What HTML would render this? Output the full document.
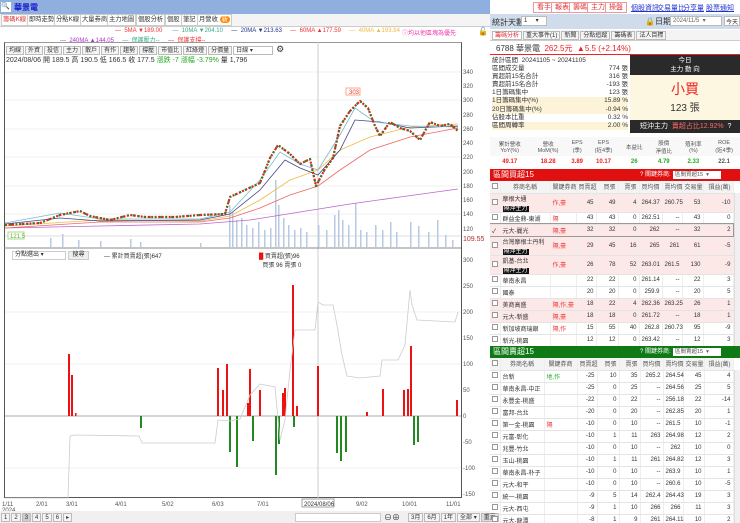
<!DOCTYPE html>
<html><head><meta charset="utf-8">
<style>
*{margin:0;padding:0;box-sizing:border-box}
body{width:740px;height:523px;overflow:hidden;background:#fff;font-family:"Liberation Sans","Noto Sans CJK TC",sans-serif;font-size:7px;color:#333;position:relative}
.a{position:absolute;white-space:nowrap}
.tab{position:absolute;top:14px;height:12px;border:1px solid #ccc;background:#fff;font-size:6.3px;line-height:10px;padding:0 1px}
.tb{display:inline-block;border:1px solid #bbb;background:#f4f4f4;padding:0 2px;margin-right:1px;height:9px;line-height:8px;font-size:6px}
.rbtn{position:absolute;top:2px;height:11px;border:1px solid #e99;background:#fff;color:#d33;font-size:7px;line-height:9px;padding:0 3px}
.lk{position:absolute;top:3px;color:#23c;text-decoration:underline;font-size:7px}
table{border-collapse:collapse;font-size:6px}
.bt td{border-bottom:1px solid #e4e4e4;border-right:1px solid #eee;text-align:right;padding:0 2px;height:12px}
.bt td:nth-child(2),.bt td:nth-child(1){text-align:left}
.bt td:nth-child(3){text-align:left;color:#e33}
.pk{background:#fde8e8}
.dk{background:#111;color:#fff;padding:0 1px}
.cb{display:inline-block;width:6px;height:6px;border:1px solid #999;background:#fff}
</style></head><body>
<div class="a" style="left:0;top:0;width:490px;height:14px;background:#8fb0de"></div>
<div class="a" style="left:490px;top:0;width:250px;height:14px;background:#fff"></div>
<div class="a" style="left:1px;top:2px;width:10px;height:10px;background:#fff;font-size:7px;line-height:10px">🔍</div>
<div class="a" style="left:14px;top:2px;color:#11c;font-weight:bold;font-size:8px">華景電</div>
<div class="rbtn" style="left:533px">看手</div><div class="rbtn" style="left:551px">報表</div><div class="rbtn" style="left:569px">籌碼</div><div class="rbtn" style="left:587px">主力</div><div class="rbtn" style="left:605px">操盤</div>
<div class="lk" style="left:631px">個股資訊</div><div class="lk" style="left:657px">交易量比</div><div class="lk" style="left:683px">分享量</div><div class="lk" style="left:706px">股票通知</div>
<div class="a" style="left:0;top:14px;width:490px;height:13px;background:#f4f4f4;border-bottom:1px solid #ccc"></div>
<div class="tab" style="left:1px;color:#d33">籌碼K線</div><div class="tab" style="left:27px">即時走勢</div><div class="tab" style="left:54px">分點K線</div><div class="tab" style="left:80px">大量券商</div><div class="tab" style="left:107px">主力地圖</div><div class="tab" style="left:136px">個股分析</div><div class="tab" style="left:165px">個股</div><div class="tab" style="left:181px">筆記</div><div class="tab" style="left:197px">月營收 <span style="background:#f80;color:#fff;border-radius:4px;padding:0 2px">新</span></div>
<div class="a" style="left:115px;top:28px;font-size:6px"><span style="color:#e33">— &nbsp;5MA ▼189.00</span>&nbsp;&nbsp;&nbsp;&nbsp;&nbsp;&nbsp;<span style="color:#3a8">— &nbsp;10MA ▼204.10</span>&nbsp;&nbsp;&nbsp;&nbsp;&nbsp;<span style="color:#238">— &nbsp;20MA ▼213.63</span>&nbsp;&nbsp;&nbsp;&nbsp;&nbsp;<span style="color:#e33">— &nbsp;60MA ▲177.59</span>&nbsp;&nbsp;&nbsp;&nbsp;&nbsp;<span style="color:#eb4">— &nbsp;40MA ▲193.84</span></div>
<div class="a" style="left:60px;top:35px;font-size:6px"><span style="color:#a3c">— &nbsp;240MA ▲144.05</span>&nbsp;&nbsp;&nbsp;&nbsp;&nbsp;<span style="color:#3a8">— &nbsp;保護壓力--</span>&nbsp;&nbsp;&nbsp;&nbsp;&nbsp;<span style="color:#e33">— &nbsp;保護支撐--</span></div>
<div class="a" style="left:402px;top:28px;font-size:6px;color:#e3a">ⓘ均以他區塊為優先</div>
<div class="a" style="left:478px;top:27px;font-size:8px">🔓</div>
<div class="a" style="left:4px;top:42px;width:458px;height:456px;border:1px solid #555;border-top:1px solid #999"></div>
<div class="a" style="left:6px;top:44px"><span class="tb">均線</span><span class="tb">外資</span><span class="tb">投信</span><span class="tb">主力</span><span class="tb">散戶</span><span class="tb">有作</span><span class="tb">趨勢</span><span class="tb">撐壓</span><span class="tb">市值比</span><span class="tb">紅綠燈</span><span class="tb">分價量</span><span class="tb" style="width:40px;background:#fff">日線 ▾</span> <span style="font-size:9px">⚙</span></div>
<div class="a" style="left:6px;top:55px;font-size:7px">2024/08/06 開 189.5 高 190.5 低 166.5 收 177.5 <span style="color:#2a2">漲跌 -7</span> <span style="color:#2a2">漲幅 -3.79%</span> 量 1,796</div>
<svg class="a" style="left:0;top:0" width="490" height="523">
<g stroke="#f0f0f0" stroke-width="1">
<line x1="5" x2="461" y1="72" y2="72"/><line x1="5" x2="461" y1="100" y2="100"/><line x1="5" x2="461" y1="129" y2="129"/><line x1="5" x2="461" y1="157" y2="157"/><line x1="5" x2="461" y1="186" y2="186"/><line x1="5" x2="461" y1="214" y2="214"/>
<line x1="5" x2="461" y1="312" y2="312"/><line x1="5" x2="461" y1="364" y2="364"/><line x1="5" x2="461" y1="468" y2="468"/>
</g>
<line x1="318" x2="318" y1="42" y2="498" stroke="#ccc"/>
<line x1="4" x2="461" y1="248" y2="248" stroke="#888"/>
<line x1="5" x2="461" y1="236" y2="236" stroke="#ddd"/>
<g fill="#b7c9e3">
<rect x="50" y="238" width="1.5" height="9"/><rect x="62" y="234" width="1.5" height="13"/><rect x="78" y="240" width="1.5" height="7"/><rect x="100" y="241" width="1.5" height="6"/><rect x="130" y="239" width="1.5" height="8"/><rect x="140" y="242" width="1.5" height="5"/><rect x="200" y="243" width="1.5" height="4"/>
<rect x="229" y="205" width="1.5" height="42"/><rect x="232" y="212" width="1.5" height="35"/><rect x="236" y="220" width="1.5" height="27"/><rect x="241" y="218" width="1.5" height="29"/><rect x="246" y="225" width="1.5" height="22"/><rect x="252" y="228" width="1.5" height="19"/><rect x="258" y="222" width="1.5" height="25"/><rect x="264" y="230" width="1.5" height="17"/><rect x="270" y="228" width="1.5" height="19"/><rect x="275" y="180" width="1.5" height="67"/><rect x="278" y="205" width="1.5" height="42"/><rect x="283" y="218" width="1.5" height="29"/><rect x="288" y="225" width="1.5" height="22"/><rect x="294" y="230" width="1.5" height="17"/><rect x="300" y="228" width="1.5" height="19"/><rect x="306" y="232" width="1.5" height="15"/><rect x="318" y="225" width="1.5" height="22"/><rect x="326" y="230" width="1.5" height="17"/><rect x="334" y="215" width="1.5" height="32"/><rect x="338" y="210" width="1.5" height="37"/><rect x="342" y="220" width="1.5" height="27"/><rect x="348" y="225" width="1.5" height="22"/><rect x="355" y="203" width="1.5" height="44"/><rect x="360" y="230" width="1.5" height="17"/><rect x="366" y="232" width="1.5" height="15"/><rect x="375" y="225" width="1.5" height="22"/><rect x="382" y="230" width="1.5" height="17"/><rect x="390" y="222" width="1.5" height="25"/><rect x="396" y="232" width="1.5" height="15"/><rect x="410" y="222" width="1.5" height="25"/><rect x="418" y="226" width="1.5" height="21"/><rect x="428" y="232" width="1.5" height="15"/><rect x="437" y="220" width="1.5" height="27"/><rect x="445" y="235" width="1.5" height="12"/><rect x="452" y="240" width="1.5" height="7"/>
</g>
<polyline fill="none" stroke="#b6c" stroke-width="0.8" points="5,228 100,226 200,224 250,220 300,212 350,204 400,197 458,189"/>
<polyline fill="none" stroke="#e66" stroke-width="0.8" points="5,228 100,222 200,222 230,218 260,208 290,195 318,186 340,170 370,150 410,137 458,128"/>
<polyline fill="none" stroke="#eb4" stroke-width="0.8" points="5,226 100,220 200,221 230,216 260,200 290,180 318,170 340,150 370,137 410,127 458,124"/>
<polyline fill="none" stroke="#448" stroke-width="0.8" points="5,224 60,218 100,221 200,220 230,214 260,190 285,160 300,168 318,175 340,150 355,120 380,122 410,128 458,126"/>
<polyline fill="none" stroke="#7bc" stroke-width="0.8" points="5,223 60,213 100,219 200,219 230,212 260,180 280,152 300,164 318,170 340,135 355,108 375,122 410,126 458,127"/>
<g fill="none" stroke-width="2.2" stroke-linejoin="round">
<polyline stroke="#d22" stroke-dasharray="2,1.5" points="5,225 40,223 60,215 80,211 90,216 110,220 130,215 145,217 175,217 200,215 225,214 230,197 245,190 260,183 270,158 278,145 290,154 300,164 310,159 316,186 325,169 333,158 340,126 350,111 360,101 368,108 375,126 380,136 390,122 400,128 410,131 420,140 430,122 440,126 450,124 458,131"/>
<polyline stroke="#282" stroke-dasharray="1.5,4" points="5,225 40,223 60,215 80,211 90,216 110,220 130,215 145,217 175,217 200,215 225,214 230,197 245,190 260,183 270,158 278,145 290,154 300,164 310,159 316,186 325,169 333,158 340,126 350,111 360,101 368,108 375,126 380,136 390,122 400,128 410,131 420,140 430,122 440,126 450,124 458,131"/>
</g>
<rect x="346" y="88" width="14" height="7" fill="#fff" stroke="#fa8"/><text x="349" y="94" font-size="6" fill="#e33">303</text>
<rect x="8" y="232" width="16" height="7" fill="#fff" stroke="#ad8"/><text x="10" y="238" font-size="6" fill="#6a3">121.5</text>
<line x1="5" x2="461" y1="416" y2="416" stroke="#aaa"/>
<g fill="#e11">
<rect x="68" y="354" width="2" height="62"/><rect x="71" y="375" width="2" height="41"/><rect x="75" y="413" width="1.5" height="3"/><rect x="217" y="368" width="2" height="48"/><rect x="222" y="390" width="2" height="26"/><rect x="226" y="364" width="2" height="52"/><rect x="247" y="403" width="2" height="13"/><rect x="249" y="369" width="2" height="47"/><rect x="259" y="390" width="2" height="26"/><rect x="282" y="393" width="2" height="23"/><rect x="284" y="388" width="2" height="28"/><rect x="292" y="285" width="2" height="131"/><rect x="296" y="406" width="2" height="10"/><rect x="317" y="366" width="2" height="50"/><rect x="366" y="412" width="2" height="4"/><rect x="382" y="389" width="2" height="27"/><rect x="403" y="390" width="2" height="26"/><rect x="407" y="389" width="2" height="27"/><rect x="410" y="346" width="2" height="70"/><rect x="456" y="400" width="2" height="16"/>
</g>
<g fill="#282">
<rect x="140" y="416" width="2" height="12"/><rect x="229" y="416" width="2" height="36"/><rect x="236" y="416" width="2" height="51"/><rect x="252" y="416" width="2" height="25"/><rect x="275" y="416" width="2" height="59"/><rect x="278" y="416" width="2" height="28"/><rect x="293" y="416" width="2" height="11"/><rect x="336" y="416" width="2" height="37"/><rect x="340" y="416" width="2" height="45"/><rect x="345" y="416" width="2" height="36"/><rect x="413" y="416" width="2" height="29"/><rect x="417" y="416" width="2" height="26"/>
</g>
<polyline fill="none" stroke="#ccc" stroke-width="0.8" points="5,498 68,498 70,436 75,435 139,436 142,443 215,443 218,420 230,421 240,419 250,395 260,384 275,387 280,440 285,420 290,370 295,330 315,330 318,302 323,305 333,305 337,325 342,355 347,376 360,378 380,376 382,360 398,360 405,345 410,290 412,305 417,320 455,322 458,312"/>
<g font-size="6" fill="#555">
<text x="463" y="74">340</text><text x="463" y="88">320</text><text x="463" y="102">300</text><text x="463" y="117">280</text><text x="463" y="131">260</text><text x="463" y="145">240</text><text x="463" y="159">220</text><text x="463" y="174">200</text><text x="463" y="188">180</text><text x="463" y="202">160</text><text x="463" y="216">140</text><text x="463" y="231">120</text>
<text x="463" y="262">300</text><text x="463" y="288">250</text><text x="463" y="314">200</text><text x="463" y="340">150</text><text x="463" y="366">100</text><text x="463" y="392">50</text><text x="463" y="418">0</text><text x="463" y="444">-50</text><text x="463" y="470">-100</text><text x="463" y="496">-150</text>
<text x="2" y="506">1/11</text><text x="2" y="512">2024</text><text x="36" y="506">2/01</text><text x="66" y="506">3/01</text><text x="115" y="506">4/01</text><text x="162" y="506">5/02</text><text x="212" y="506">6/03</text><text x="257" y="506">7/01</text><text x="356" y="506">9/02</text><text x="402" y="506">10/01</text><text x="446" y="506">11/01</text>
</g>
<text x="463" y="241" font-size="7" fill="#a33">109.55</text>
<rect x="302" y="499" width="32" height="8" fill="#fff" stroke="#666" stroke-width="0.6"/><text x="304" y="506" font-size="6" fill="#333">2024/08/06</text>
</svg>
<div class="a" style="left:12px;top:251px;width:54px;height:9px;border:1px solid #ccc;font-size:6px;line-height:7px;padding-left:2px;background:#fff">分點選出 ▾</div>
<div class="a" style="left:68px;top:251px;width:21px;height:9px;border:1px solid #ccc;background:#eee;font-size:6px;line-height:7px;text-align:center">搜尋</div>
<div class="a" style="left:104px;top:251px;font-size:6px">— 累計買賣超(張)647</div>
<div class="a" style="left:259px;top:251px;font-size:6px"><span style="color:#e11">█</span> 買賣超(張)96<br>&nbsp;&nbsp;買張 96 賣張 0</div>
<div class="a" style="left:0;top:511px;width:490px;height:12px;background:#f0f0f0"></div>
<div class="a" style="left:1px;top:513px;font-size:7px"><span class="tb">1</span><span class="tb">2</span><span class="tb" style="background:#ccc">3</span><span class="tb">4</span><span class="tb">5</span><span class="tb">6</span><span class="tb">▸</span></div>
<div class="a" style="left:295px;top:513px;width:86px;height:9px;border:1px solid #ccc;background:#fff"></div>
<div class="a" style="left:384px;top:512px;font-size:8px">⊖⊕</div>
<div class="a" style="left:408px;top:513px"><span class="tb">3月</span><span class="tb">6月</span><span class="tb">1年</span><span class="tb">全部 ▾</span><span class="tb" style="background:#ddd">重置</span></div>

<div class="a" style="left:490px;top:14px;width:250px;height:15px;background:#cfdcec"></div>
<div class="a" style="left:492px;top:17px;font-size:8px">統計天數</div>
<div class="a" style="left:521px;top:16px;width:26px;height:10px;border:1px solid #bbb;background:#fff;font-size:6px;padding-left:2px">1 &nbsp;&nbsp;&nbsp;&nbsp;▾</div>
<div class="a" style="left:645px;top:16px;font-size:8px">🔒日期</div>
<div class="a" style="left:670px;top:16px;width:52px;height:10px;border:1px solid #bbb;background:#fff;font-size:6px;padding-left:2px;color:#666">2024/11/5 &nbsp;▾</div>
<div class="a" style="left:724px;top:16px;width:16px;height:10px;border:1px solid #bbb;background:#fff;font-size:6px;text-align:center">今天</div>
<div class="a" style="left:490px;top:30px;width:250px;height:11px;background:#f4f4f4;border-bottom:1px solid #ccc"></div>
<div class="a" style="left:492px;top:31px;font-size:6px"><span class="tb" style="color:#d33;background:#fff">籌碼分析</span><span class="tb">重大事件(1)</span><span class="tb">新聞</span><span class="tb">分點追蹤</span><span class="tb">籌碼表</span><span class="tb">法人目標</span></div>
<div class="a" style="left:496px;top:43px;font-size:8px">6788 華景電 &nbsp;<span style="color:#e22;font-size:8px">262.5元 &nbsp;▲5.5 (+2.14%)</span></div>
<div class="a" style="left:490px;top:54px;width:250px;height:1px;background:#e22"></div>
<div class="a" style="left:492px;top:57px;width:136px;font-size:6.5px;line-height:8.1px">
<div>統計區間 &nbsp;20241105 ~ 20241105</div>
<div>區間成交量<span style="float:right">774 張</span></div>
<div>買超前15名合計<span style="float:right">316 張</span></div>
<div>賣超前15名合計<span style="float:right">-193 張</span></div>
<div>1日籌碼集中<span style="float:right">123 張</span></div>
<div style="background:#fdf3d8">1日籌碼集中(%)<span style="float:right">15.89 %</span></div>
<div style="background:#fdf3d8">20日籌碼集中(%)<span style="float:right">-0.94 %</span></div>
<div>佔股本比重<span style="float:right">0.32 %</span></div>
<div style="background:#fdf3d8">區間周轉率<span style="float:right">2.00 %</span></div>
</div>
<div class="a" style="left:630px;top:55px;width:110px;height:20px;background:#2a2a2a;color:#fff;font-size:6.5px;text-align:center;line-height:9px;padding-top:1px">今日<br>主力 動 向</div>
<div class="a" style="left:630px;top:75px;width:110px;height:45px;background:#fdf6e0;text-align:center"><div style="color:#e22;font-size:14px;margin-top:4px">小買</div><div style="font-size:10px">123 張</div></div>
<div class="a" style="left:630px;top:120px;width:110px;height:13px;background:#2a2a2a;color:#fff;font-size:7px;line-height:13px;padding-left:10px">短沖主力 &nbsp;<span style="color:#f66">賣超占比12.92%</span> &nbsp;?</div>
<table class="a" style="left:490px;top:137px;width:250px;font-size:5.5px;text-align:center;color:#555">
<tr style="height:19px;background:#f8f8f8"><td>累計營收<br>YoY(%)</td><td>營收<br>MoM(%)</td><td>EPS<br>(季)</td><td>EPS<br>(近4季)</td><td>本益比</td><td>股價<br>淨值比</td><td>殖利率<br>(%)</td><td>ROE<br>(近4季)</td></tr>
<tr style="height:11px;font-weight:bold;font-size:6px"><td style="color:#e22">49.17</td><td style="color:#e22">18.28</td><td style="color:#e22">3.89</td><td style="color:#e22">10.17</td><td style="color:#2a2">26</td><td style="color:#2a2">4.79</td><td style="color:#2a2">2.33</td><td>22.1</td></tr>
</table>
<div class="a" style="left:490px;top:169px;width:250px;height:12px;background:#e01010;color:#fff;font-size:8px;line-height:12px;padding-left:3px">區間買超15<span style="position:absolute;left:150px;font-size:6px">? 關鍵券商:</span><span style="position:absolute;left:183px;top:2px;width:48px;height:8px;background:#fff;color:#555;font-size:5.5px;line-height:8px;padding-left:2px">區間買超15 &nbsp;▾</span></div>
<div class="a" style="left:490px;top:181px;width:250px;height:166px;overflow:hidden">
<table class="bt" style="width:243px;table-layout:fixed">
<colgroup><col style="width:10px"><col style="width:50px"><col style="width:26px"><col style="width:20px"><col style="width:22px"><col style="width:21px"><col style="width:23px"><col style="width:20px"><col style="width:21px"><col style="width:30px"></colgroup>
<tr style="background:#f4f4f4;color:#555"><td><span class="cb"></span></td><td style="text-align:center">券商名稱</td><td style="color:#555;text-align:center">關鍵券商</td><td>買賣超</td><td>買張</td><td>賣張</td><td>買均價</td><td>賣均價</td><td>交易量</td><td>損益(萬)</td></tr>
<tr class="pk" style="height:17px"><td><span class="cb"></span></td><td>摩根大通<br><span class="dk">隔沖主力</span></td><td>作,<span>豪</span></td><td>45</td><td>49</td><td>4</td><td>264.37</td><td>260.75</td><td>53</td><td>-10</td></tr>
<tr><td><span class="cb"></span></td><td>群益金鼎-東湖</td><td>隔</td><td>43</td><td>43</td><td>0</td><td>262.51</td><td>--</td><td>43</td><td>0</td></tr>
<tr class="pk" style="outline:1px solid #999"><td>✓</td><td>元大-麗光</td><td>隔,豪</td><td>32</td><td>32</td><td>0</td><td>262</td><td>--</td><td>32</td><td>2</td></tr>
<tr class="pk" style="height:17px"><td><span class="cb"></span></td><td>台灣摩根士丹利<br><span class="dk">隔沖主力</span></td><td>隔,豪</td><td>29</td><td>45</td><td>16</td><td>265</td><td>261</td><td>61</td><td>-5</td></tr>
<tr class="pk" style="height:17px"><td><span class="cb"></span></td><td>凱基-台北<br><span class="dk">隔沖主力</span></td><td>作,豪</td><td>26</td><td>78</td><td>52</td><td>263.01</td><td>261.5</td><td>130</td><td>-9</td></tr>
<tr><td><span class="cb"></span></td><td>華南永昌</td><td></td><td>22</td><td>22</td><td>0</td><td>261.14</td><td>--</td><td>22</td><td>3</td></tr>
<tr><td><span class="cb"></span></td><td>國泰</td><td></td><td>20</td><td>20</td><td>0</td><td>259.9</td><td>--</td><td>20</td><td>5</td></tr>
<tr class="pk"><td><span class="cb"></span></td><td>美商高盛</td><td>隔,作,豪</td><td>18</td><td>22</td><td>4</td><td>262.36</td><td>263.25</td><td>26</td><td>1</td></tr>
<tr class="pk"><td><span class="cb"></span></td><td>元大-新盛</td><td>隔,豪</td><td>18</td><td>18</td><td>0</td><td>261.72</td><td>--</td><td>18</td><td>1</td></tr>
<tr><td><span class="cb"></span></td><td>新加坡商瑞銀</td><td>隔,作</td><td>15</td><td>55</td><td>40</td><td>262.8</td><td>260.73</td><td>95</td><td>-9</td></tr>
<tr><td><span class="cb"></span></td><td>新光-桃園</td><td></td><td>12</td><td>12</td><td>0</td><td>263.42</td><td>--</td><td>12</td><td>3</td></tr>
<tr class="pk"><td><span class="cb"></span></td><td>凱基興 門</td><td>隔,作,豪</td><td>10</td><td>10</td><td>0</td><td>265.1</td><td>--</td><td>10</td><td>-3</td></tr>
</table></div>
<div class="a" style="left:734px;top:193px;width:6px;height:154px;background:#f0f0f0;border-left:1px solid #ddd"></div>
<div class="a" style="left:490px;top:346px;width:250px;height:12px;background:#0f7a15;color:#fff;font-size:8px;line-height:12px;padding-left:3px">區間賣超15<span style="position:absolute;left:150px;font-size:6px">? 關鍵券商:</span><span style="position:absolute;left:183px;top:2px;width:48px;height:8px;background:#fff;color:#555;font-size:5.5px;line-height:8px;padding-left:2px">區間賣超15 &nbsp;▾</span></div>
<div class="a" style="left:490px;top:358px;width:250px;height:165px;overflow:hidden">
<table class="bt" style="width:243px;table-layout:fixed">
<colgroup><col style="width:10px"><col style="width:44px"><col style="width:33px"><col style="width:20px"><col style="width:22px"><col style="width:21px"><col style="width:23px"><col style="width:20px"><col style="width:21px"><col style="width:29px"></colgroup>
<tr style="background:#f4f4f4;color:#555"><td><span class="cb"></span></td><td style="text-align:center">券商名稱</td><td style="color:#555;text-align:center">關鍵券商</td><td>買賣超</td><td>買張</td><td>賣張</td><td>買均價</td><td>賣均價</td><td>交易量</td><td>損益(萬)</td></tr>
<tr><td><span class="cb"></span></td><td>台新</td><td style="color:#2a2">地,作</td><td>-25</td><td>10</td><td>35</td><td>265.2</td><td>264.54</td><td>45</td><td>4</td></tr>
<tr><td><span class="cb"></span></td><td>華南永昌-中正</td><td></td><td>-25</td><td>0</td><td>25</td><td>--</td><td>264.56</td><td>25</td><td>5</td></tr>
<tr><td><span class="cb"></span></td><td>永豐金-桃盛</td><td></td><td>-22</td><td>0</td><td>22</td><td>--</td><td>256.18</td><td>22</td><td>-14</td></tr>
<tr><td><span class="cb"></span></td><td>富邦-台北</td><td></td><td>-20</td><td>0</td><td>20</td><td>--</td><td>262.85</td><td>20</td><td>1</td></tr>
<tr><td><span class="cb"></span></td><td>第一金-桃園</td><td>隔</td><td>-10</td><td>0</td><td>10</td><td>--</td><td>261.5</td><td>10</td><td>-1</td></tr>
<tr><td><span class="cb"></span></td><td>元富-彰化</td><td></td><td>-10</td><td>1</td><td>11</td><td>263</td><td>264.98</td><td>12</td><td>2</td></tr>
<tr><td><span class="cb"></span></td><td>兆豐-竹北</td><td></td><td>-10</td><td>0</td><td>10</td><td>--</td><td>262</td><td>10</td><td>0</td></tr>
<tr><td><span class="cb"></span></td><td>玉山-桃園</td><td></td><td>-10</td><td>1</td><td>11</td><td>261</td><td>264.82</td><td>12</td><td>3</td></tr>
<tr><td><span class="cb"></span></td><td>華南永昌-朴子</td><td></td><td>-10</td><td>0</td><td>10</td><td>--</td><td>263.9</td><td>10</td><td>1</td></tr>
<tr><td><span class="cb"></span></td><td>元大-和平</td><td></td><td>-10</td><td>0</td><td>10</td><td>--</td><td>260.6</td><td>10</td><td>-5</td></tr>
<tr><td><span class="cb"></span></td><td>統一-桃園</td><td></td><td>-9</td><td>5</td><td>14</td><td>262.4</td><td>264.43</td><td>19</td><td>3</td></tr>
<tr><td><span class="cb"></span></td><td>元大-西屯</td><td></td><td>-9</td><td>1</td><td>10</td><td>266</td><td>266</td><td>11</td><td>3</td></tr>
<tr><td><span class="cb"></span></td><td>元大-龍潭</td><td></td><td>-8</td><td>1</td><td>9</td><td>261</td><td>264.11</td><td>10</td><td>2</td></tr>
<tr><td><span class="cb"></span></td><td>元大-</td><td></td><td>-8</td><td>0</td><td>8</td><td>--</td><td>263</td><td>8</td><td>1</td></tr>
</table></div>
<div class="a" style="left:734px;top:370px;width:6px;height:153px;background:#f0f0f0;border-left:1px solid #ddd"></div>
</body></html>
